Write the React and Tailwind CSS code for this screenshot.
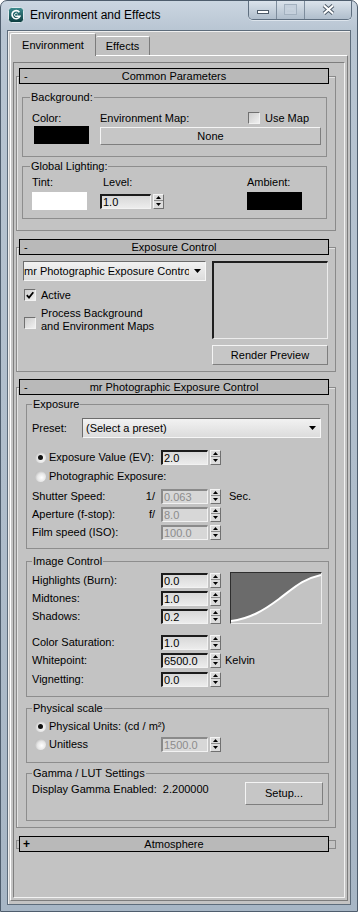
import React from 'react';

// small win-classic style controls used by the 3ds Max dialog

function MaxIcon() {
  return (
    <svg width="16" height="16" viewBox="0 0 16 16" className="shrink-0">
      <defs>
        <linearGradient id="maxg" x1="0" y1="0" x2="0" y2="1">
          <stop offset="0" stopColor="#3f8d90" />
          <stop offset="1" stopColor="#0b3a3d" />
        </linearGradient>
      </defs>
      <rect x="0.5" y="0.5" width="15" height="15" rx="3" fill="url(#maxg)" stroke="#dfe9ee" />
      <path d="M11.4 5.2 A4.1 4.1 0 1 0 11.9 9.3 L8.3 9.3" fill="none" stroke="#fff" strokeWidth="1.6" />
      <path d="M9.6 7.2 A1.6 1.6 0 1 0 9.4 9" fill="none" stroke="#fff" strokeWidth="1" />
    </svg>
  );
}

function Check({ checked }) {
  return (
    <div className="w-[12px] h-[12px] shrink-0 flex items-center justify-center border border-t-[#707070] border-l-[#707070] border-r-[#f2f2f2] border-b-[#f2f2f2] bg-gradient-to-br from-[#cdcdcd] to-[#f0f0f0]">
      {checked && (
        <svg width="8" height="8" viewBox="0 0 8 8">
          <path d="M0.8 4.2 L3 6.6 L7.3 1.2" stroke="#000" strokeWidth="1.8" fill="none" />
        </svg>
      )}
    </div>
  );
}

function Radio({ on }) {
  return (
    <div className="w-[11px] h-[11px] shrink-0 rounded-full flex items-center justify-center bg-[radial-gradient(circle_at_60%_60%,#ffffff_0%,#e6e6e6_45%,#9a9a9a_100%)]">
      {on && <div className="w-[5px] h-[5px] rounded-full bg-[#111]" />}
    </div>
  );
}

function Arrows() {
  return (
    <div className="ml-[2px] w-[11px] h-[15px] shrink-0 flex flex-col border border-t-[#f4f4f4] border-l-[#f4f4f4] border-r-[#707070] border-b-[#707070] bg-[#dcdcdc]">
      <div className="h-[6px] flex items-center justify-center border-b border-b-[#8c8c8c]">
        <svg width="5" height="3" viewBox="0 0 5 3"><path d="M0 3 L2.5 0 L5 3 Z" fill="#000" /></svg>
      </div>
      <div className="flex-1 flex items-center justify-center">
        <svg width="5" height="3" viewBox="0 0 5 3"><path d="M0 0 L5 0 L2.5 3 Z" fill="#000" /></svg>
      </div>
    </div>
  );
}

function Field({ value, off, wide }) {
  const look = off
    ? 'border-t-[#8a8a8a] border-l-[#8a8a8a] text-[#8c8c8c] bg-[#d7d7d7]'
    : 'border-t-[#1c1c1c] border-l-[#1c1c1c] text-black bg-gradient-to-b from-[#d8d8d8] to-[#ececec]';
  return (
    <div className="flex items-center">
      <div className={`${wide ? 'w-[51px]' : 'w-[47px]'} h-[15px] pl-[1px] flex items-center leading-none border border-t-2 border-l-2 border-r-[#f2f2f2] border-b-[#f2f2f2] ${look}`}>
        {value}
      </div>
      <Arrows />
    </div>
  );
}

function Btn({ className, children }) {
  return (
    <div className={`flex items-center justify-center border border-t-[#f4f4f4] border-l-[#f4f4f4] border-r-[#7e7e7e] border-b-[#7e7e7e] bg-[#c6c6c6] ${className}`}>
      {children}
    </div>
  );
}

function Combo({ className, text }) {
  return (
    <div className={`flex items-center border border-t-[#6c6c6c] border-l-[#6c6c6c] border-r-[#f6f6f6] border-b-[#f6f6f6] bg-gradient-to-b from-[#f2f2f2] to-[#dcdcdc] ${className}`}>
      <span className="flex-1 overflow-hidden whitespace-nowrap">{text}</span>
      <svg className="ml-[5px] mr-[4px] shrink-0" width="7" height="4" viewBox="0 0 7 4">
        <path d="M0 0 H7 L3.5 4 Z" fill="#000" />
      </svg>
    </div>
  );
}

function Header({ title, sign }) {
  return (
    <div className="relative z-10 ml-[3px] w-[310px] h-[16px] grid grid-cols-[16px_1fr_16px] items-center border border-black bg-[#b9b9b9] leading-[14px]">
      <span className={sign === '+' ? 'pl-[3px] font-bold text-[12px]' : 'pl-[4px]'}>{sign}</span>
      <span className="text-center">{title}</span>
      <span />
    </div>
  );
}

function Rollout({ title, className, body, children }) {
  return (
    <div className={className}>
      <Header title={title} sign="-" />
      <div className={`-mt-[8px] w-[320px] border border-[#8a8a8a] shadow-[inset_1px_1px_0_#e2e2e2] ${body}`}>
        {children}
      </div>
    </div>
  );
}

function Group({ title, className, legend, children }) {
  return (
    <fieldset className={`border border-[#8d8d8d] ${className}`}>
      <legend className={`px-[1px] leading-[13px] ${legend}`}>{title}</legend>
      {children}
    </fieldset>
  );
}

function Row({ label, suffix, value, off, after, className }) {
  return (
    <div className={`flex items-center h-[15px] ${className || ''}`}>
      <div className="w-[129px] shrink-0 flex justify-between pr-[6px] whitespace-nowrap">
        <span>{label}</span>
        {suffix && <span>{suffix}</span>}
      </div>
      <Field value={value} off={off} />
      {after}
    </div>
  );
}

function RadioRow({ on, label, value, off, className }) {
  return (
    <div className={`flex items-center h-[15px] ${className || ''}`}>
      <div className="w-[129px] shrink-0 flex items-center pl-[3px] whitespace-nowrap">
        <Radio on={on} />
        <span className="ml-[3px]">{label}</span>
      </div>
      {value && <Field value={value} off={off} />}
    </div>
  );
}

function Curve() {
  return (
    <div className="ml-[9px] w-[92px] h-[52px] border border-t-[#2e2e2e] border-l-[#2e2e2e] border-r-[#ececec] border-b-[#ececec] bg-[#c3c3c3]">
      <svg width="90" height="50" viewBox="0 0 90 50" className="block">
        <path d="M0 0 L0 48 C18 46 32 38 48 26 S72 6 90 2 L90 0 Z" fill="#6b6b6b" />
        <path d="M0 48 C18 46 32 38 48 26 S72 6 90 2" fill="none" stroke="#fff" strokeWidth="2" />
      </svg>
    </div>
  );
}

export default function App() {
  return (
    <div className="w-[358px] h-[912px] flex flex-col overflow-hidden rounded-t-[7px] border border-[#4e5d6d] bg-[linear-gradient(180deg,#cbd6e1_0px,#b8c5d2_30px,#a7b6c5_100%)] font-['Liberation_Sans',Arial,sans-serif] text-[11px] leading-[13px] text-black">
      {/* title bar */}
      <div className="h-[29px] shrink-0 flex items-start">
        <div className="flex items-center gap-[6px] pl-[7px] pt-[6px]">
          <MaxIcon />
          <span className="text-[12px] leading-[16px]">Environment and Effects</span>
        </div>
        <div className="ml-auto mr-[5px] -mt-[1px] flex h-[20px] rounded-b-[5px] border border-t-0 border-[#5f6f80] overflow-hidden shadow-[0_1px_0_#dce4ec]">
          <div className="w-[28px] flex items-center justify-center pt-[4px] bg-gradient-to-b from-[#dde5ed] to-[#b0becc] border-r border-r-[#7d8c9c]">
            <div className="w-[12px] h-[4px] bg-white border border-[#4d5a68]" />
          </div>
          <div className="w-[28px] flex items-center justify-center bg-gradient-to-b from-[#dde5ed] to-[#b0becc] border-r border-r-[#7d8c9c]">
            <div className="w-[11px] h-[9px] border-2 border-t-[3px] border-[#c5d0dc] outline outline-1 outline-[#a3b1bf]" />
          </div>
          <div className="w-[46px] flex items-center justify-center bg-gradient-to-b from-[#dde5ed] to-[#b0becc]">
            <svg width="13" height="11" viewBox="0 0 13 11">
              <path d="M2 1.5 L11 9.5 M11 1.5 L2 9.5" stroke="#4d5a68" strokeWidth="4" />
              <path d="M2 1.5 L11 9.5 M11 1.5 L2 9.5" stroke="#fff" strokeWidth="2" />
            </svg>
          </div>
        </div>
      </div>

      {/* client area */}
      <div className="flex-1 mx-[6px] mb-[6px] flex flex-col border border-[#5d6c7b] bg-[#c3c3c3] shadow-[inset_1px_1px_0_#efefef]">
        {/* tabs */}
        <div className="h-[24px] shrink-0 flex items-end pl-[2px] pt-[2px]">
          <div className="relative z-10 -mb-[1px] w-[86px] h-[23px] flex items-center justify-center rounded-t-[2px] border-t border-l border-r border-t-white border-l-white border-r-[#7c7c7c] bg-[#c3c3c3]">
            Environment
          </div>
          <div className="w-[54px] h-[19px] flex items-center justify-center rounded-t-[2px] border-t border-r border-t-white border-r-[#7c7c7c] bg-[#c0c0c0]">
            Effects
          </div>
        </div>

        {/* tab pane */}
        <div className="flex-1 mx-[2px] mb-[3px] flex flex-col border border-t-white border-l-white border-r-[#7c7c7c] border-b-[#7c7c7c]">
          <div className="flex-1 mx-[2px] mt-[6px] mb-[2px] border border-t-[#7e7e7e] border-l-[#7e7e7e] border-r-[#f2f2f2] border-b-[#f2f2f2] pl-[2px] pt-[5px]">
            {/* Common Parameters */}
            <Rollout title="Common Parameters" className="" body="pt-[14px] pb-[11px]">
              <Group title="Background:" className="ml-[5px] w-[305px]" legend="ml-[7px]">
                <div className="flex mt-[7px] pb-[11px]">
                  <div className="w-[77px] pl-[9px]">
                    <div className="h-[14px] flex items-center">Color:</div>
                    <div className="mt-[1px] ml-[2px] w-[55px] h-[18px] bg-black" />
                  </div>
                  <div className="w-[221px]">
                    <div className="h-[14px] flex items-center">
                      <span className="w-[148px]">Environment Map:</span>
                      <Check />
                      <span className="ml-[5px]">Use Map</span>
                    </div>
                    <Btn className="mt-[2px] h-[18px] w-full">None</Btn>
                  </div>
                </div>
              </Group>
              <Group title="Global Lighting:" className="mt-[3px] ml-[5px] w-[305px]" legend="ml-[7px]">
                <div className="flex mt-[2px] pb-[8px]">
                  <div className="w-[77px] pl-[9px]">
                    <div className="h-[14px] flex items-center">Tint:</div>
                    <div className="mt-[3px] w-[55px] h-[18px] bg-white" />
                  </div>
                  <div className="w-[147px]">
                    <div className="h-[14px] flex items-center pl-[3px]">Level:</div>
                    <div className="mt-[5px]">
                      <Field value="1.0" wide />
                    </div>
                  </div>
                  <div>
                    <div className="h-[14px] flex items-center">Ambient:</div>
                    <div className="mt-[3px] w-[55px] h-[18px] bg-black" />
                  </div>
                </div>
              </Group>
            </Rollout>

            {/* Exposure Control */}
            <Rollout title="Exposure Control" className="mt-[8px]" body="pt-[13px] pb-[6px] pl-[6px] flex">
              <div className="w-[183px]">
                <Combo className="w-[183px] h-[20px]" text="mr Photographic Exposure Control" />
                <div className="mt-[8px] pl-[1px] h-[12px] flex items-center">
                  <Check checked />
                  <span className="ml-[5px]">Active</span>
                </div>
                <div className="mt-[6px] pl-[1px] flex items-start">
                  <div className="mt-[10px]">
                    <Check />
                  </div>
                  <span className="ml-[5px]">
                    Process Background
                    <br />
                    and Environment Maps
                  </span>
                </div>
              </div>
              <div className="ml-[6px] w-[116px]">
                <div className="h-[78px] border-t-2 border-l-2 border-r border-b border-t-[#1e1e1e] border-l-[#1e1e1e] border-r-[#ececec] border-b-[#ececec]" />
                <Btn className="mt-[6px] h-[20px] w-full">Render Preview</Btn>
              </div>
            </Rollout>

            {/* mr Photographic Exposure Control */}
            <Rollout title="mr Photographic Exposure Control" className="mt-[7px]" body="pt-[10px] pb-[6px]">
              <Group title="Exposure" className="ml-[9px] w-[303px]" legend="ml-[5px]">
                <div className="pl-[5px] pb-[8px]">
                  <div className="mt-[7px] h-[20px] flex items-center">
                    <span className="w-[50px]">Preset:</span>
                    <Combo className="w-[239px] h-[20px] pl-[3px]" text="(Select a preset)" />
                  </div>
                  <RadioRow on label="Exposure Value (EV):" value="2.0" className="mt-[12px]" />
                  <RadioRow label="Photographic Exposure:" className="mt-[4px]" />
                  <Row
                    label="Shutter Speed:"
                    suffix="1/"
                    value="0.063"
                    off
                    className="mt-[5px]"
                    after={<span className="ml-[8px]">Sec.</span>}
                  />
                  <Row label="Aperture (f-stop):" suffix="f/" value="8.0" off className="mt-[3px]" />
                  <Row label="Film speed (ISO):" value="100.0" off className="mt-[3px]" />
                </div>
              </Group>

              <Group title="Image Control" className="mt-[6px] ml-[9px] w-[303px]" legend="ml-[5px]">
                <div className="pl-[5px] pb-[9px]">
                  <div className="mt-[4px] flex items-start">
                    <div className="pt-[1px]">
                      <Row label="Highlights (Burn):" value="0.0" />
                      <Row label="Midtones:" value="1.0" className="mt-[3px]" />
                      <Row label="Shadows:" value="0.2" className="mt-[3px]" />
                    </div>
                    <Curve />
                  </div>
                  <Row label="Color Saturation:" value="1.0" className="mt-[11px]" />
                  <Row
                    label="Whitepoint:"
                    value="6500.0"
                    className="mt-[3px]"
                    after={<span className="ml-[4px]">Kelvin</span>}
                  />
                  <Row label="Vignetting:" value="0.0" className="mt-[4px]" />
                </div>
              </Group>

              <Group title="Physical scale" className="mt-[5px] ml-[9px] w-[303px]" legend="ml-[5px]">
                <div className="pl-[5px] pb-[10px]">
                  <RadioRow on label="Physical Units: (cd / m²)" className="mt-[4px]" />
                  <RadioRow label="Unitless" value="1500.0" off className="mt-[3px]" />
                </div>
              </Group>

              <Group title="Gamma / LUT Settings" className="mt-[4px] ml-[9px] w-[303px]" legend="ml-[5px]">
                <div className="mt-[2px] pl-[5px] pb-[15px] flex items-start">
                  <span className="w-[213px] mt-[1px] whitespace-pre">Display Gamma Enabled:  2.200000</span>
                  <Btn className="w-[78px] h-[23px]">Setup...</Btn>
                </div>
              </Group>
            </Rollout>

            {/* Atmosphere (collapsed) */}
            <div className="mt-[8px]">
              <Header title="Atmosphere" sign="+" />
              <div className="-mt-[12px] w-[320px] h-[9px] border border-[#8a8a8a]" />
            </div>
          </div>
        </div>
      </div>
    </div>
  );
}
